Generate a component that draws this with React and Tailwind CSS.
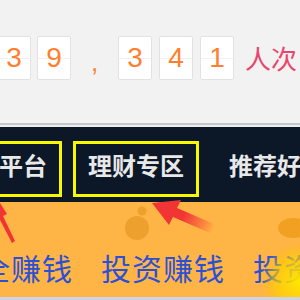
import React from "react";

const Digit = ({ d }) => (
  <div className="relative w-[34px] h-[44px] bg-white border border-[#e2e2e2] rounded-[2px] flex items-center justify-center">
    <div className="absolute left-0 right-0 top-[21px] h-px bg-[#f1f1f1]" />
    <span className="relative text-[28px] leading-none text-[#ff7f2e]" style={{ fontFamily: '"Liberation Sans", Arial, sans-serif' }}>{d}</span>
  </div>
);

export default function App() {
  const cjk = { fontFamily: '"Noto Sans CJK SC", "Noto Sans", sans-serif' };
  return (
    <div className="relative w-[300px] h-[300px] overflow-hidden bg-[#f2f2f2]">
      {/* counter */}
      <div className="h-[123px] bg-[#f2f2f2] pt-[36px]">
        <div className="flex items-start ml-[-3px]">
          <Digit d="3" />
          <div className="ml-[6px]"><Digit d="9" /></div>
          <span className="w-[47px] text-center text-[26px] leading-[52px] text-[#ff7f2e]" style={{ fontFamily: '"Liberation Sans", Arial, sans-serif' }}>,</span>
          <Digit d="3" />
          <div className="ml-[7px]"><Digit d="4" /></div>
          <div className="ml-[7px]"><Digit d="1" /></div>
          <span className="ml-[11px] text-[26px] leading-[44px] text-[#e8466e] whitespace-nowrap" style={cjk}>人次</span>
        </div>
      </div>
      <div className="h-[2px] bg-[#c6c6c6]" />
      <div className="h-[2px] bg-[#ededed]" />
      {/* nav */}
      <div className="h-[75px] bg-[#0c1828] pt-[14px] flex items-start whitespace-nowrap" style={cjk}>
        <div className="ml-[-16px] h-[56px] border-[3px] border-[#f8f800] px-[12px] pb-[8px] flex items-center text-[24px] font-bold text-[#e8e8e8]">平台</div>
        <div className="ml-[11px] h-[56px] border-[3px] border-[#f8f800] px-[12px] pb-[8px] flex items-center text-[24px] font-bold text-[#e8e8e8]">理财专区</div>
        <div className="ml-[30px] h-[56px] pb-[8px] flex items-center text-[24px] font-bold text-[#e8e8e8]">推荐好友</div>
      </div>
      {/* banner */}
      <div className="h-[95px] bg-[#ffb446] pt-[50px]">
        <div className="relative flex ml-[-51px] gap-[28px] whitespace-nowrap text-[30px] leading-[30px] text-[#2b50d6] tracking-[1px]" style={cjk}>
          <span>安全赚钱</span>
          <span>投资赚钱</span>
          <span>投资赚钱</span>
        </div>
      </div>
      <div className="h-[3px] bg-[#cdd4e2]" />
      {/* overlays */}
      <svg className="absolute left-0 top-0 pointer-events-none" width="300" height="300" viewBox="0 0 300 300">
        <defs>
          <linearGradient id="ag" x1="152" y1="202" x2="214" y2="230" gradientUnits="userSpaceOnUse">
            <stop offset="0.5" stopColor="#f23434" />
            <stop offset="1" stopColor="#f23434" stopOpacity="0" />
          </linearGradient>
          <radialGradient id="yg" cx="300" cy="282" r="40" gradientUnits="userSpaceOnUse">
            <stop offset="0" stopColor="#ffe800" />
            <stop offset="0.6" stopColor="#ffd000" stopOpacity="0.7" />
            <stop offset="1" stopColor="#ffc000" stopOpacity="0" />
          </radialGradient>
        </defs>
        <rect x="240" y="240" width="60" height="57" fill="url(#yg)" />
        <circle cx="142" cy="211" r="4.5" fill="#eea02e" />
        <circle cx="137" cy="228" r="12" fill="#eea02e" />
        <ellipse cx="293" cy="228" rx="15" ry="10" fill="#f2a022" />
        <polygon points="152,203 181,200 177,208 214,224 210,233 173,217 169,225" fill="url(#ag)" />
        <polygon points="0,203 7,214 3,216 15,241 12,243 0,220" fill="#f23434" />
      </svg>
    </div>
  );
}
